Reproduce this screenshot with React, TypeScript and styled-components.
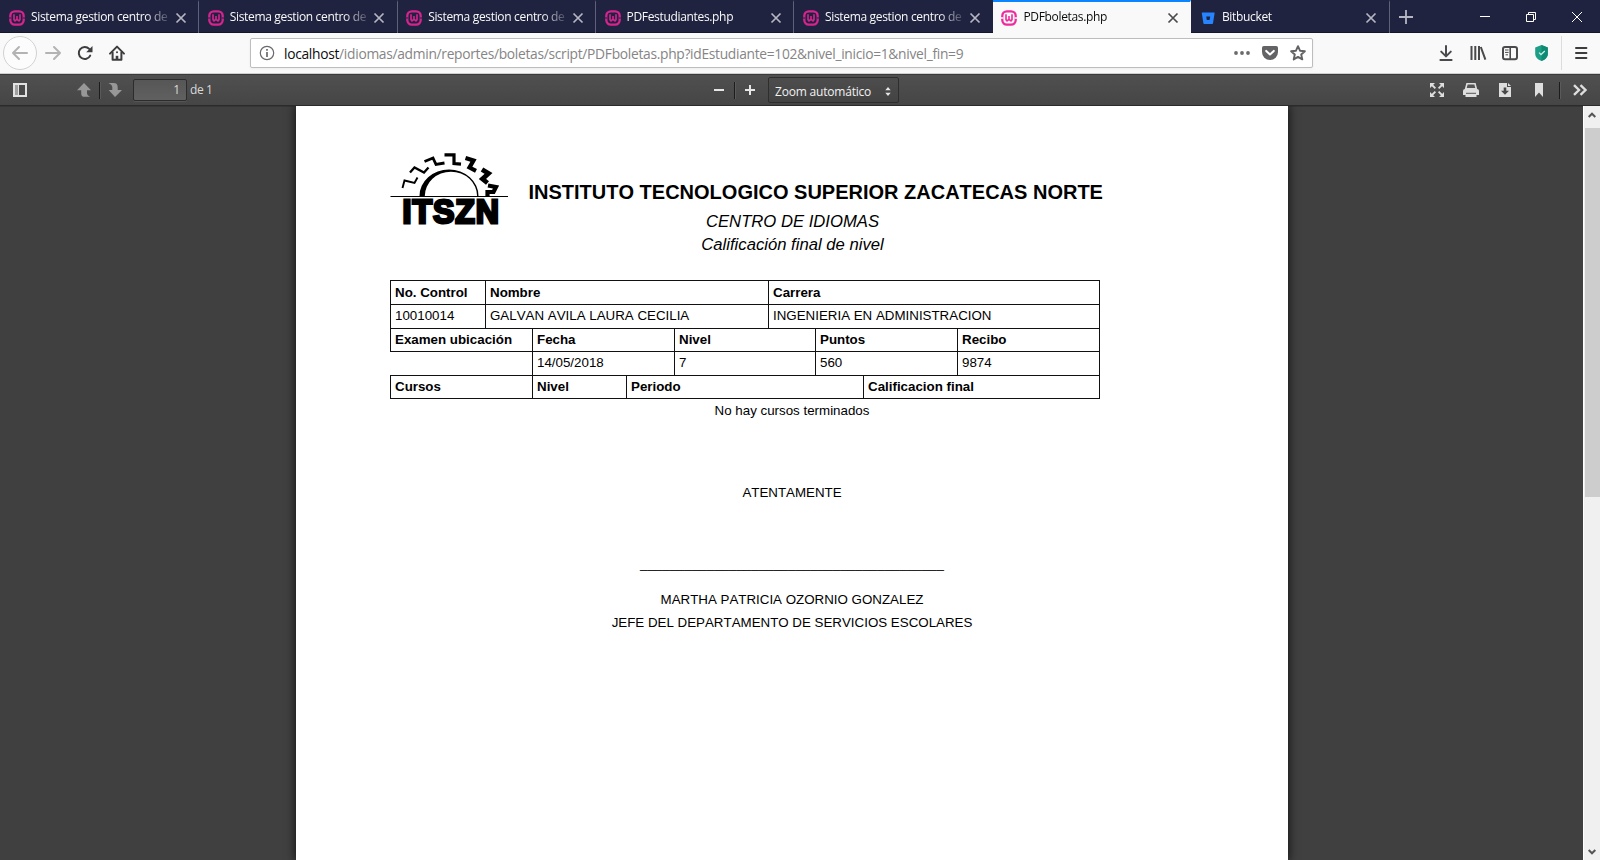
import React from 'react';
import styled, { createGlobalStyle } from 'styled-components';

const GlobalStyle = createGlobalStyle`
  *, *::before, *::after { box-sizing: border-box; }
  html, body { margin: 0; padding: 0; overflow: hidden; }
  body { background: #404040; }
  svg { display: block; flex: none; overflow: visible; }
`;

const uiFont = `"Open Sans", "Noto Sans", sans-serif`;
const docFont = `"Liberation Sans", Arial, sans-serif`;

const Window = styled.div`
  width: 1600px;
  height: 860px;
  display: flex;
  flex-direction: column;
  overflow: hidden;
  font-family: ${uiFont};
`;

/* ---------- tab strip ---------- */

const TabStrip = styled.div`
  height: 33px;
  flex: none;
  display: flex;
  background: #202340;
  box-shadow: inset 0 -1px 0 #14162c;
`;

const TabItem = styled.div<{ $active?: boolean; $divider?: boolean }>`
  width: 198.45px;
  flex: none;
  display: flex;
  align-items: center;
  padding-left: 8.6px;
  background: ${p => (p.$active ? '#f9f9fa' : 'transparent')};
  color: ${p => (p.$active ? '#0c0c0d' : '#f9f9fa')};
  border-top: 2px solid ${p => (p.$active ? '#0a84ff' : 'transparent')};
  border-right: 1px solid ${p => (p.$divider ? '#5f6178' : 'transparent')};

  &:first-child {
    width: 199.1px;
    padding-left: 9px;
  }
`;

const TabLabel = styled.span`
  width: 138px;
  margin-left: 6px;
  padding-bottom: 1px;
  font-size: 12px;
  line-height: 30px;
  letter-spacing: -0.33px;
  white-space: nowrap;
  mask-image: linear-gradient(to right, #000 114px, transparent 142px);
`;

const TabClose = styled.span<{ $active?: boolean }>`
  margin-left: 3.5px;
  width: 16px;
  display: flex;
  justify-content: center;
  color: ${p => (p.$active ? '#4a4a4f' : '#b5b6c2')};
`;

const NewTab = styled.div`
  width: 32px;
  display: flex;
  align-items: center;
  justify-content: center;
`;

const WindowControls = styled.div`
  margin-left: auto;
  display: flex;
`;

const WindowControl = styled.div`
  width: 46px;
  display: flex;
  align-items: center;
  justify-content: center;
`;

/* ---------- navigation bar ---------- */

const NavBar = styled.div`
  height: 41px;
  flex: none;
  display: flex;
  align-items: center;
  padding-left: 3px;
  background: #f9f9fa;
  border-bottom: 1px solid #cfcfcf;
`;

const BackButton = styled.div`
  width: 34px;
  height: 34px;
  border-radius: 50%;
  border: 1px solid #d2d2d3;
  background: #fcfcfc;
  display: flex;
  align-items: center;
  justify-content: center;
`;

const NavButton = styled.div`
  width: 32px;
  height: 34px;
  display: flex;
  align-items: center;
  justify-content: center;
`;

const NavTools = styled.div`
  margin-left: 117px;
  display: flex;
`;

const NavDivider = styled.div`
  width: 1px;
  height: 34px;
  margin: 0 3px;
  background: #dcdcdd;
`;

const AddressBar = styled.div`
  width: 1063px;
  height: 30px;
  margin-left: 117px;
  display: flex;
  align-items: center;
  padding-left: 8px;
  background: #fff;
  border: 1px solid #bdbdbd;
  border-radius: 2px;
  box-shadow: 0 1px 3px rgba(0, 0, 0, 0.05);
`;

const Address = styled.span`
  flex: 1;
  margin-left: 9px;
  padding-top: 2px;
  font-size: 13.8px;
  line-height: 26px;
  letter-spacing: -0.3px;
  white-space: nowrap;
  color: #858585;
`;

const Host = styled.span`
  color: #0c0c0d;
`;

const AddressAction = styled.div`
  width: 28px;
  display: flex;
  justify-content: center;
`;

/* ---------- document viewer toolbar ---------- */

const ViewerBar = styled.div`
  height: 32px;
  flex: none;
  display: flex;
  align-items: center;
  background: linear-gradient(#505050, #454545);
  box-shadow: inset 0 1px 0 #3b3b3b, inset 0 -1px 0 #2b2b2b;
  color: #d9d9d9;
`;

const BarGroup = styled.div<{ $left?: number }>`
  display: flex;
  align-items: center;
  margin-left: ${p => p.$left ?? 0}px;
`;

const BarButton = styled.div<{ $width?: number }>`
  width: ${p => p.$width ?? 30}px;
  height: 25px;
  display: flex;
  align-items: center;
  justify-content: center;
`;

const BarDivider = styled.div`
  width: 1px;
  height: 17px;
  background: #1c1c1c;
  box-shadow: 1px 0 0 #5a5a5a;
`;

const PageNumber = styled.div`
  width: 54px;
  height: 22px;
  margin-left: 3px;
  padding-right: 6px;
  border: 1px solid #2c2c2c;
  border-radius: 2px;
  background: linear-gradient(#565656, #606060);
  box-shadow: 0 1px 0 #555;
  text-align: right;
  font-size: 12px;
  line-height: 20px;
`;

const PageCount = styled.span`
  width: 40px;
  margin-left: 3px;
  padding-bottom: 1px;
  font-size: 12px;
  letter-spacing: -0.4px;
`;

const ZoomSelect = styled.div`
  width: 131px;
  height: 26px;
  margin-left: 3px;
  padding: 2px 7px 0 6px;
  display: flex;
  align-items: center;
  justify-content: space-between;
  border: 1px solid #2e2e2e;
  border-radius: 2px;
  background: linear-gradient(#4d4d4d, #434343);
  color: #f2f2f2;
  font-size: 12px;
  letter-spacing: -0.2px;
`;

/* ---------- document ---------- */

const Viewer = styled.div`
  flex: 1;
  min-height: 0;
  display: flex;
  background: #404040;
`;

const Canvas = styled.div`
  width: 1583px;
  display: flex;
  justify-content: center;
  overflow: hidden;
  box-shadow: inset 0 1px 0 #363636;
`;

const Sheet = styled.div`
  width: 992px;
  height: 754px;
  padding: 46px 0 0 94px;
  background: #fff;
  color: #000;
  font-family: ${docFont};
  font-kerning: none;
  font-variant-ligatures: none;
  box-shadow: 0 0 9px 1px rgba(0, 0, 0, 0.7);
`;

const Letterhead = styled.div`
  display: flex;
  height: 128px;
`;

const Titles = styled.div`
  margin-left: 21px;
  padding-top: 28px;
`;

const Institution = styled.h1`
  margin: 0;
  font-size: 20px;
  line-height: 24px;
  font-weight: bold;
  white-space: nowrap;
`;

const Subtitle = styled.p`
  margin: 0;
  width: 528px;
  font-size: 16.67px;
  line-height: 23.3px;
  font-style: italic;
  text-align: center;

  &:first-of-type { margin-top: 6px; }
`;

const Grid = styled.div`
  width: 710px;
  border-left: 1px solid transparent;
`;

const Row = styled.div<{ $cols: string; $height: number }>`
  display: grid;
  grid-template-columns: ${p => p.$cols};
  grid-template-rows: 100%;
  height: ${p => p.$height}px;
  width: 709px;
  margin-left: -1px;
`;

const Cell = styled.div<{ $head?: boolean; $drop?: number }>`
  margin-right: -1px;
  margin-bottom: -1px;
  padding: ${p => p.$drop ?? 0}px 0 0 4.5px;
  border: 1px solid #111;
  font-size: 13.33px;
  line-height: 22px;
  font-weight: ${p => (p.$head ? 'bold' : 'normal')};
  white-space: nowrap;
`;

const Line = styled.p<{ $top: number }>`
  margin: ${p => p.$top}px 0 0;
  width: 805px;
  text-align: center;
  font-size: 13.33px;
  line-height: 23px;
`;

/* ---------- scroll bar ---------- */

const ScrollBar = styled.div`
  width: 17px;
  display: flex;
  flex-direction: column;
  align-items: center;
  background: #f0f0f0;
  border-left: 1px solid #fff;
`;

const ScrollArrow = styled.div<{ $down?: boolean }>`
  height: 22px;
  padding: ${p => (p.$down ? '6px 0 0' : '0 0 4px')};
  display: flex;
  align-items: center;
`;

const ScrollThumb = styled.div`
  width: 15px;
  height: 369px;
  margin-bottom: auto;
  background: #cdcdcd;
`;

/* ---------- icons ---------- */

const WampIcon = ({ active }: { active?: boolean }) => {
  const pink = active ? '#ee2a9d' : '#d8238f';
  return (
    <svg width="16" height="16" viewBox="0 0 16 16" fill="none">
      <rect x="1.3" y="1.3" width="13.4" height="13.4" rx="4.6" stroke={pink} strokeWidth="2.3" />
      <path d="M0 8h2.6M13.4 8H16" stroke={active ? '#f9f9fa' : '#4b2a5c'} strokeWidth="1.4" />
      <path d="M5 4.3v5.4l1 1.2 2-1.6 2 1.6 1-1.2V4.3M8 9.3V6" stroke={pink} strokeWidth="1.6" />
    </svg>
  );
};

const BitbucketIcon = () => (
  <svg width="16" height="16" viewBox="0 0 16 16">
    <path d="M2.2 2.6h12q.5 0 .4.6l-1.6 10q-.1.7-.8.7H4.2q-.7 0-.8-.7l-1.6-10q-.1-.6.4-.6Z" fill="#2684ff" />
    <path d="M6.2 6.4h4l-.6 3.6H6.8Z" fill="#202340" />
  </svg>
);

const CloseIcon = () => (
  <svg width="10" height="10" viewBox="0 0 10 10" stroke="currentColor" strokeWidth="1.7">
    <path d="M.5.5l9 9M9.5.5l-9 9" />
  </svg>
);

const ArrowIcon = ({ flip, color }: { flip?: boolean; color: string }) => (
  <svg width="16" height="14" viewBox="0 0 16 14" fill="none" stroke={color} strokeWidth="2" strokeLinecap="round" strokeLinejoin="round">
    <path d={flip ? 'M1 7h14M9 1l6 6-6 6' : 'M15 7H1M7 1L1 7l6 6'} />
  </svg>
);

const ReloadIcon = () => (
  <svg width="16" height="16" viewBox="0 0 16 16">
    <path d="M13.2 10.6A6 6 0 1 1 12.2 3.9" fill="none" stroke="#3d3d40" strokeWidth="2" strokeLinecap="round" />
    <path d="M15.5 1v6.3H9.2Z" fill="#3d3d40" />
  </svg>
);

const HomeIcon = () => (
  <svg width="16" height="16" viewBox="0 0 16 16" fill="none" stroke="#3d3d40" strokeWidth="2" strokeLinejoin="round" strokeLinecap="round">
    <path d="M1 8.6L8 1.6l7 7" />
    <path d="M3.6 7.6v7.2h8.8V7.6" />
    <path d="M8 15v-4.2" strokeWidth="2.6" strokeLinecap="butt" />
    <path d="M8 7.2v.1" />
  </svg>
);

const InfoIcon = () => (
  <svg width="16" height="16" viewBox="0 0 16 16" fill="none" stroke="#6a6a6d">
    <circle cx="8" cy="8" r="6.7" strokeWidth="1.2" />
    <path d="M8 7v5M8 4v1.8" strokeWidth="1.7" />
  </svg>
);

const DotsIcon = () => (
  <svg width="16" height="16" viewBox="0 0 16 16" fill="#6b6b6e">
    <circle cx="2" cy="8" r="1.9" /><circle cx="8" cy="8" r="1.9" /><circle cx="14" cy="8" r="1.9" />
  </svg>
);

const PocketIcon = () => (
  <svg width="16" height="16" viewBox="0 0 16 16">
    <path d="M1.8 1h12.4Q16 1 16 2.8V7a8 8 0 0 1-16 0V2.8Q0 1 1.8 1Z" fill="#636366" />
    <path d="M4.2 5.9L8 9.5l3.8-3.6" fill="none" stroke="#fff" strokeWidth="2" strokeLinecap="round" strokeLinejoin="round" />
  </svg>
);

const StarIcon = () => (
  <svg width="16" height="16" viewBox="0 0 16 16" fill="none" stroke="#636366" strokeWidth="1.9" strokeLinejoin="round">
    <path d="M8 1.2l2 4.5 4.9.5-3.7 3.3 1.1 4.9L8 11.9l-4.3 2.5 1.1-4.9L1.1 6.2 6 5.7Z" />
  </svg>
);

const DownloadIcon = () => (
  <svg width="16" height="16" viewBox="0 0 16 16" fill="none" stroke="#4a4a4d" strokeWidth="2" strokeLinecap="round" strokeLinejoin="round">
    <path d="M8 1v10M3.2 6.6L8 11.4l4.8-4.8M2.4 15h11.2" />
  </svg>
);

const LibraryIcon = () => (
  <svg width="16" height="16" viewBox="0 0 16 16" fill="none" stroke="#4a4a4d" strokeWidth="2">
    <path d="M1.5 1v14M5.3 1v14M9 1v14M10.8 2l4.6 12.6" />
  </svg>
);

const SidebarIcon = () => (
  <svg width="16" height="16" viewBox="0 0 16 16" fill="none" stroke="#4a4a4d">
    <rect x="1" y="2" width="14" height="12.2" rx="2" strokeWidth="2" />
    <path d="M8.2 2v12" strokeWidth="1.6" />
    <path d="M3 5h3.6M3 7.4h3.6M3.6 9.8h2.4" strokeWidth="1" />
  </svg>
);

const ShieldIcon = () => (
  <svg width="16" height="16" viewBox="0 0 16 16">
    <path d="M7.5 0l6.3 2.6V9q0 4.5-6.3 7-6.3-2.5-6.3-7V2.6Z" fill="#1d9e86" />
    <path d="M7.5 0l6.3 2.6V9q0 4.5-6.3 7Z" fill="#0f8a73" />
    <path d="M5 7.6l2 1.9 3.8-3.5" fill="none" stroke="#c9ede4" strokeWidth="1.3" />
  </svg>
);

const MenuIcon = () => (
  <svg width="14" height="14" viewBox="0 0 14 14" stroke="#3d3d40" strokeWidth="2" strokeLinecap="round">
    <path d="M2 2h10.4M2 7h10.4M2 12h10.4" />
  </svg>
);

const PanelIcon = () => (
  <svg width="14" height="14" viewBox="0 0 14 14">
    <path d="M1 1h12v12H1Z" fill="none" stroke="#e2e2e2" strokeWidth="2" />
    <rect x="2" y="2" width="3" height="10" fill="#a0a0a0" />
    <path d="M5.5 2v10" stroke="#e2e2e2" strokeWidth="1" />
  </svg>
);

const PageArrow = ({ down }: { down?: boolean }) => (
  <svg width="16" height="16" viewBox="0 0 16 16" fill="#979797">
    {down
      ? <path d="M1.4 1h5.3q4 0 4 4.4V8H15l-7 7-6.3-7h3.6V5.2Q5.3 3 1.4 1Z" />
      : <path d="M8 1l7 7.2h-4v3.4q0 1.8 3 3.2H8.4q-3.2 0-3.2-3.4V8.2H1Z" />}
  </svg>
);

const MinusIcon = () => (
  <svg width="10" height="10" viewBox="0 0 10 10" stroke="#e6e6e6" strokeWidth="2"><path d="M0 5h10" /></svg>
);

const PlusIcon = () => (
  <svg width="10" height="10" viewBox="0 0 10 10" stroke="#e6e6e6" strokeWidth="2"><path d="M0 5h10M5 0v10" /></svg>
);

const SelectArrows = () => (
  <svg width="6" height="9" viewBox="0 0 6 9" fill="#e6e6e6"><path d="M3 0l2.7 3.3H.3ZM3 9L.3 5.7h5.4Z" /></svg>
);

const ExpandIcon = () => (
  <svg width="16" height="16" viewBox="0 0 16 16">
    <g fill="#dedede">
      <path d="M1 1h5L1 6ZM15 1v5l-5-5ZM1 15v-5l5 5ZM15 15h-5l5-5Z" />
    </g>
    <path d="M3 3l3.4 3.4M13 3L9.6 6.4M3 13l3.4-3.4M13 13L9.6 9.6" stroke="#dedede" strokeWidth="1.8" />
  </svg>
);

const PrintIcon = () => (
  <svg width="16" height="16" viewBox="0 0 16 16">
    <path d="M4 1.8h8l1.3 5H2.7Z" fill="#555" stroke="#dedede" strokeWidth="1.6" />
    <path d="M2 7h12q2 0 2 2v4H0V9q0-2 2-2Z" fill="#dedede" />
    <path d="M2.5 12.5V15h11v-2.5" fill="#dedede" />
    <path d="M3 11.3h10" stroke="#555" strokeWidth="1" />
  </svg>
);

const SaveIcon = () => (
  <svg width="16" height="16" viewBox="0 0 16 16">
    <path d="M2 1h8v4h4v10H2Z" fill="#dedede" />
    <path d="M11 1l3 3h-3Z" fill="#dedede" />
    <path d="M6.7 5.4h2.6v3.4H12l-4 4-4-4h2.7Z" fill="#484848" />
  </svg>
);

const BookmarkIcon = () => (
  <svg width="16" height="16" viewBox="0 0 16 16"><path d="M4 1h8v14l-4-4.4L4 15Z" fill="#dedede" /></svg>
);

const MoreIcon = () => (
  <svg width="16" height="16" viewBox="0 0 16 16" fill="none" stroke="#dedede" strokeWidth="2.4">
    <path d="M2 3.2L7 8l-5 4.8M8.5 3.2l5 4.8-5 4.8" />
  </svg>
);

const Chevron = ({ down }: { down?: boolean }) => (
  <svg width="8" height="6" viewBox="0 0 8 6" fill="none" stroke="#555" strokeWidth="2">
    <path d={down ? 'M.7 1L4 4.3 7.3 1' : 'M.7 5L4 1.7 7.3 5'} />
  </svg>
);

const InstituteLogo = () => (
  <svg width="118" height="78" viewBox="390 152 118 78">
    <path d="M419.5 196a29.5 26.5 0 0 1 59 0h-1.4a26 24.2 0 0 0-52.3 0Z" fill="#000" />
    <g fill="none" stroke="#000">
      <path d="M402.5 188l2-7.500 10 2.500 3-5.500" strokeWidth="1.9" />
      <path d="M410 172.500l4.500-5 9.500 5 4.500-5" strokeWidth="2.3" />
      <path d="M424.500 161.500l8.500-3.500 3 6.500 8.500-1.500" strokeWidth="2.8" />
      <path d="M444.500 154.800h9.500v8.700l7 .7" strokeWidth="3.2" />
      <path d="M465.500 158l8 2.500-4 7 6.500 3.300" strokeWidth="4.2" />
      <path d="M482 169.500l6.500 4-6 5.500 5 4" strokeWidth="4.8" />
      <path d="M488 185.500l8 1.500-2.500 5h-6v4" strokeWidth="4.2" />
      <path d="M390.500 196.500H508" strokeWidth="1" />
    </g>
    <text
      x="402.5" y="222.5" textLength="97.5" lengthAdjust="spacingAndGlyphs" letterSpacing="1"
      fontFamily={'"Liberation Sans", Arial, sans-serif'} fontWeight="bold" fontSize="33"
      fill="#000" stroke="#000" strokeWidth="2.8"
    >ITSZN</text>
  </svg>
);

/* ---------- page ---------- */

const tabs = [
  { label: 'Sistema gestion centro de', icon: 'wamp', divider: true },
  { label: 'Sistema gestion centro de', icon: 'wamp', divider: true },
  { label: 'Sistema gestion centro de', icon: 'wamp', divider: true },
  { label: 'PDFestudiantes.php', icon: 'wamp', divider: true },
  { label: 'Sistema gestion centro de', icon: 'wamp' },
  { label: 'PDFboletas.php', icon: 'wamp', active: true },
  { label: 'Bitbucket', icon: 'bitbucket', divider: true },
];

export default function App() {
  return (
    <>
      <GlobalStyle />
      <Window>
        <TabStrip>
          {tabs.map((t, i) => (
            <TabItem key={i} $active={t.active} $divider={t.divider}>
              {t.icon === 'wamp' ? <WampIcon active={t.active} /> : <BitbucketIcon />}
              <TabLabel>{t.label}</TabLabel>
              <TabClose $active={t.active}><CloseIcon /></TabClose>
            </TabItem>
          ))}
          <NewTab>
            <svg width="14" height="14" viewBox="0 0 14 14" stroke="#b5b6c2" strokeWidth="1.8"><path d="M7 0v14M0 7h14" /></svg>
          </NewTab>
          <WindowControls>
            <WindowControl>
              <svg width="10" height="10" viewBox="0 0 10 10" stroke="#fff"><path d="M0 4.5h10" /></svg>
            </WindowControl>
            <WindowControl>
              <svg width="10" height="10" viewBox="0 0 10 10" fill="none" stroke="#fff"><path d="M.5 2.5h7v7h-7ZM2.5 2.5v-2h7v7h-2" /></svg>
            </WindowControl>
            <WindowControl>
              <svg width="10" height="10" viewBox="0 0 10 10" stroke="#fff"><path d="M0 0l10 10M10 0L0 10" /></svg>
            </WindowControl>
          </WindowControls>
        </TabStrip>

        <NavBar>
          <BackButton><ArrowIcon color="#b3b3b4" /></BackButton>
          <NavButton><ArrowIcon flip color="#b3b3b4" /></NavButton>
          <NavButton><ReloadIcon /></NavButton>
          <NavButton><HomeIcon /></NavButton>
          <AddressBar>
            <InfoIcon />
            <Address><Host>localhost</Host>/idiomas/admin/reportes/boletas/script/PDFboletas.php?idEstudiante=102&amp;nivel_inicio=1&amp;nivel_fin=9</Address>
            <AddressAction><DotsIcon /></AddressAction>
            <AddressAction><PocketIcon /></AddressAction>
            <AddressAction><StarIcon /></AddressAction>
          </AddressBar>
          <NavTools>
            <NavButton><DownloadIcon /></NavButton>
            <NavButton><LibraryIcon /></NavButton>
            <NavButton><SidebarIcon /></NavButton>
            <NavButton><ShieldIcon /></NavButton>
            <NavDivider />
            <NavButton><MenuIcon /></NavButton>
          </NavTools>
        </NavBar>

        <ViewerBar>
          <BarGroup $left={4}>
            <BarButton $width={32}><PanelIcon /></BarButton>
          </BarGroup>
          <BarGroup $left={33}>
            <BarButton><PageArrow /></BarButton>
            <BarDivider />
            <BarButton><PageArrow down /></BarButton>
            <PageNumber>1</PageNumber>
            <PageCount>de 1</PageCount>
          </BarGroup>
          <BarGroup $left={474}>
            <BarButton><MinusIcon /></BarButton>
            <BarDivider />
            <BarButton><PlusIcon /></BarButton>
            <ZoomSelect>Zoom automático<SelectArrows /></ZoomSelect>
          </BarGroup>
          <BarGroup $left={521}>
            <BarButton $width={34}><ExpandIcon /></BarButton>
            <BarButton $width={34}><PrintIcon /></BarButton>
            <BarButton $width={34}><SaveIcon /></BarButton>
            <BarButton $width={34}><BookmarkIcon /></BarButton>
          </BarGroup>
          <BarGroup $left={3}>
            <BarDivider />
            <BarButton $width={40}><MoreIcon /></BarButton>
          </BarGroup>
        </ViewerBar>

        <Viewer>
          <Canvas>
            <Sheet>
              <Letterhead>
                <InstituteLogo />
                <Titles>
                  <Institution>INSTITUTO TECNOLOGICO SUPERIOR ZACATECAS NORTE</Institution>
                  <Subtitle>CENTRO DE IDIOMAS</Subtitle>
                  <Subtitle>Calificación final de nivel</Subtitle>
                </Titles>
              </Letterhead>
              <Grid>
                <Row $cols="95px 283px 331px" $height={24}>
                  <Cell $head $drop={1}>No. Control</Cell><Cell $head $drop={1}>Nombre</Cell><Cell $head $drop={1}>Carrera</Cell>
                </Row>
                <Row $cols="95px 283px 331px" $height={24}>
                  <Cell>10010014</Cell><Cell>GALVAN AVILA LAURA CECILIA</Cell><Cell>INGENIERIA EN ADMINISTRACION</Cell>
                </Row>
                <Row $cols="142px 142px 141px 142px 142px" $height={23}>
                  <Cell $head>Examen ubicación</Cell><Cell $head>Fecha</Cell><Cell $head>Nivel</Cell><Cell $head>Puntos</Cell><Cell $head>Recibo</Cell>
                </Row>
                <Row $cols="142px 142px 141px 142px 142px" $height={24}>
                  <div /><Cell>14/05/2018</Cell><Cell>7</Cell><Cell>560</Cell><Cell>9874</Cell>
                </Row>
                <Row $cols="142px 94px 237px 236px" $height={23}>
                  <Cell $head>Cursos</Cell><Cell $head>Nivel</Cell><Cell $head>Periodo</Cell><Cell $head>Calificacion final</Cell>
                </Row>
              </Grid>
              <Line $top={1}>No hay cursos terminados</Line>
              <Line $top={59}>ATENTAMENTE</Line>
              <Line $top={48}>{'_'.repeat(41)}</Line>
              <Line $top={13}>MARTHA PATRICIA OZORNIO GONZALEZ</Line>
              <Line $top={0}>JEFE DEL DEPARTAMENTO DE SERVICIOS ESCOLARES</Line>
            </Sheet>
          </Canvas>
          <ScrollBar>
            <ScrollArrow><Chevron /></ScrollArrow>
            <ScrollThumb />
            <ScrollArrow $down><Chevron down /></ScrollArrow>
          </ScrollBar>
        </Viewer>
      </Window>
    </>
  );
}
